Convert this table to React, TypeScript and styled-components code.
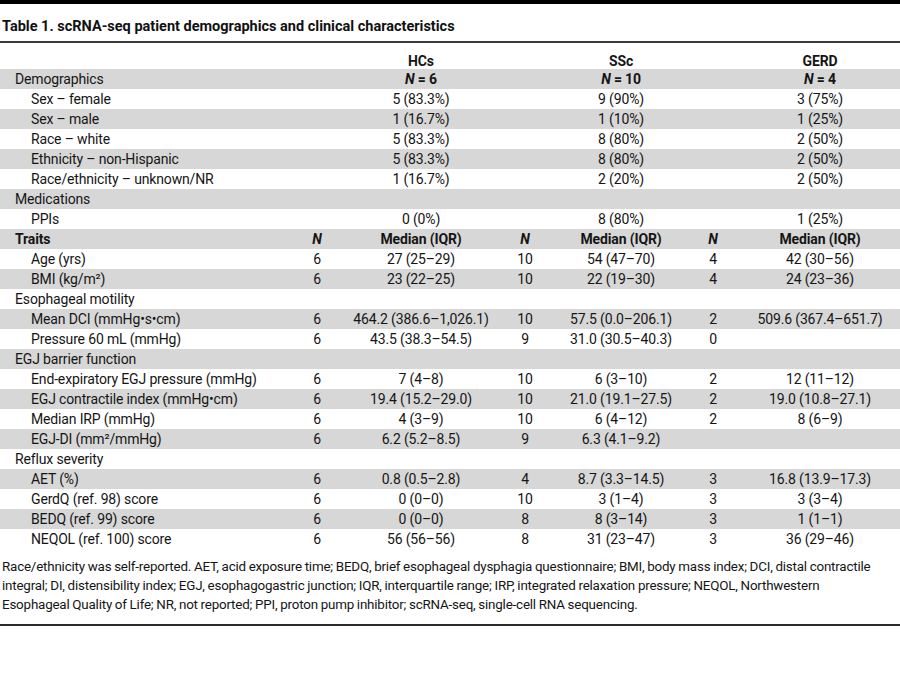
import styled, { createGlobalStyle } from "styled-components";

const GlobalStyle = createGlobalStyle`
    body {
        margin: 0;
        background: #ffffff;
        font-family: Roboto, "Liberation Sans", sans-serif;
        color: #151515;
    }
`;

type RowKind = "section" | "item" | "traits";

interface RowData {
    kind: RowKind;
    label: string;
    cells?: string[];
}

const rows: RowData[] = [
    {kind: "section", label: "Demographics"},
    {kind: "item", label: "Sex – female", cells: ["", "5 (83.3%)", "", "9 (90%)", "", "3 (75%)"]},
    {kind: "item", label: "Sex – male", cells: ["", "1 (16.7%)", "", "1 (10%)", "", "1 (25%)"]},
    {kind: "item", label: "Race – white", cells: ["", "5 (83.3%)", "", "8 (80%)", "", "2 (50%)"]},
    {kind: "item", label: "Ethnicity – non-Hispanic", cells: ["", "5 (83.3%)", "", "8 (80%)", "", "2 (50%)"]},
    {kind: "item", label: "Race/ethnicity – unknown/NR", cells: ["", "1 (16.7%)", "", "2 (20%)", "", "2 (50%)"]},
    {kind: "section", label: "Medications"},
    {kind: "item", label: "PPIs", cells: ["", "0 (0%)", "", "8 (80%)", "", "1 (25%)"]},
    {kind: "traits", label: "Traits"},
    {kind: "item", label: "Age (yrs)", cells: ["6", "27 (25–29)", "10", "54 (47–70)", "4", "42 (30–56)"]},
    {kind: "item", label: "BMI (kg/m²)", cells: ["6", "23 (22–25)", "10", "22 (19–30)", "4", "24 (23–36)"]},
    {kind: "section", label: "Esophageal motility"},
    {kind: "item", label: "Mean DCI (mmHg•s•cm)", cells: ["6", "464.2 (386.6–1,026.1)", "10", "57.5 (0.0–206.1)", "2", "509.6 (367.4–651.7)"]},
    {kind: "item", label: "Pressure 60 mL (mmHg)", cells: ["6", "43.5 (38.3–54.5)", "9", "31.0 (30.5–40.3)", "0", ""]},
    {kind: "section", label: "EGJ barrier function"},
    {kind: "item", label: "End-expiratory EGJ pressure (mmHg)", cells: ["6", "7 (4–8)", "10", "6 (3–10)", "2", "12 (11–12)"]},
    {kind: "item", label: "EGJ contractile index (mmHg•cm)", cells: ["6", "19.4 (15.2–29.0)", "10", "21.0 (19.1–27.5)", "2", "19.0 (10.8–27.1)"]},
    {kind: "item", label: "Median IRP (mmHg)", cells: ["6", "4 (3–9)", "10", "6 (4–12)", "2", "8 (6–9)"]},
    {kind: "item", label: "EGJ-DI (mm²/mmHg)", cells: ["6", "6.2 (5.2–8.5)", "9", "6.3 (4.1–9.2)", "", ""]},
    {kind: "section", label: "Reflux severity"},
    {kind: "item", label: "AET (%)", cells: ["6", "0.8 (0.5–2.8)", "4", "8.7 (3.3–14.5)", "3", "16.8 (13.9–17.3)"]},
    {kind: "item", label: "GerdQ (ref. 98) score", cells: ["6", "0 (0–0)", "10", "3 (1–4)", "3", "3 (3–4)"]},
    {kind: "item", label: "BEDQ (ref. 99) score", cells: ["6", "0 (0–0)", "8", "8 (3–14)", "3", "1 (1–1)"]},
    {kind: "item", label: "NEQOL (ref. 100) score", cells: ["6", "56 (56–56)", "8", "31 (23–47)", "3", "36 (29–46)"]},
];

const groups = [
    {name: "HCs", n: "6"},
    {name: "SSc", n: "10"},
    {name: "GERD", n: "4"},
];

// label, N, median, N, median, N, median
const colWidths = [286, 62, 146, 62, 130, 54, 160];

const renderCells = (row: RowData) => {
    if (row.label === "Demographics") {
        return groups.flatMap((g) => [
            <Cell key={g.name + "-n"}/>,
            <Cell key={g.name + "-m"} $bold><em>N</em> = {g.n}</Cell>,
        ]);
    }
    if (row.kind === "traits") {
        return groups.flatMap((g) => [
            <Cell key={g.name + "-n"} $bold><em>N</em></Cell>,
            <Cell key={g.name + "-m"} $bold>Median (IQR)</Cell>,
        ]);
    }
    const cells = row.cells ?? ["", "", "", "", "", ""];
    return cells.map((c, i) => <Cell key={i}>{c}</Cell>);
};

export default function App() {
    return (
        <Page>
            <GlobalStyle/>
            <Title>Table 1. scRNA-seq patient demographics and clinical characteristics</Title>
            <Table>
                <colgroup>
                    {colWidths.map((w, i) => <col key={i} style={{width: w}}/>)}
                </colgroup>
                <thead>
                <HeadRow>
                    <HeadCell/>
                    {groups.map((g) => [
                        <HeadCell key={g.name + "-n"}/>,
                        <HeadCell key={g.name}>{g.name}</HeadCell>,
                    ])}
                </HeadRow>
                </thead>
                <tbody>
                {rows.map((row, index) => (
                    <Row key={row.label} $shaded={index % 2 === 0}>
                        <Label $kind={row.kind}>{row.label}</Label>
                        {renderCells(row)}
                    </Row>
                ))}
                </tbody>
            </Table>
            <Footnote>
                Race/ethnicity was self-reported. AET, acid exposure time; BEDQ, brief esophageal dysphagia
                questionnaire; BMI, body mass index; DCI, distal contractile<br/>
                integral; DI, distensibility index; EGJ, esophagogastric junction; IQR, interquartile range;
                IRP, integrated relaxation pressure; NEQOL, Northwestern<br/>
                Esophageal Quality of Life; NR, not reported; PPI, proton pump inhibitor; scRNA-seq, single-cell
                RNA sequencing.
            </Footnote>
        </Page>
    );
}

const Page = styled.div`
    width: 900px;
    border-top: 4px solid #000000;
`;

const Title = styled.h1`
    margin: 0;
    padding: 15px 0 0 2px;
    height: 39px;
    box-sizing: border-box;
    font-size: 14.5px;
    font-weight: 700;
    line-height: 16px;
    color: #111111;
    border-bottom: 2px solid #3a3a3a;
`;

const Table = styled.table`
    width: 900px;
    border-collapse: collapse;
    table-layout: fixed;
    font-size: 14px;
    letter-spacing: -0.15px;
`;

const HeadRow = styled.tr`
    height: 26px;
`;

const HeadCell = styled.th`
    padding: 0;
    vertical-align: bottom;
    text-align: center;
    font-weight: 700;
    font-size: 14px;
    line-height: 16px;
`;

const Row = styled.tr<{ $shaded: boolean }>`
    height: 20px;
    background: ${(p) => (p.$shaded ? "#d7d7d7" : "#ffffff")};
`;

const Label = styled.td<{ $kind: RowKind }>`
    padding: 0 0 0 ${(p) => (p.$kind === "item" ? "31px" : "15px")};
    font-weight: ${(p) => (p.$kind === "traits" ? 700 : 400)};
    line-height: 20px;
    white-space: nowrap;
`;

const Cell = styled.td<{ $bold?: boolean }>`
    padding: 0;
    text-align: center;
    line-height: 20px;
    white-space: nowrap;
    font-weight: ${(p) => (p.$bold ? 700 : 400)};

    em {
        font-style: italic;
    }
`;

const Footnote = styled.p`
    margin: 0;
    padding: 8px 0 10px 2px;
    font-size: 13.4px;
    line-height: 19px;
    letter-spacing: -0.2px;
    word-spacing: -0.3px;
    white-space: nowrap;
    border-bottom: 2px solid #2a2a2a;
`;
